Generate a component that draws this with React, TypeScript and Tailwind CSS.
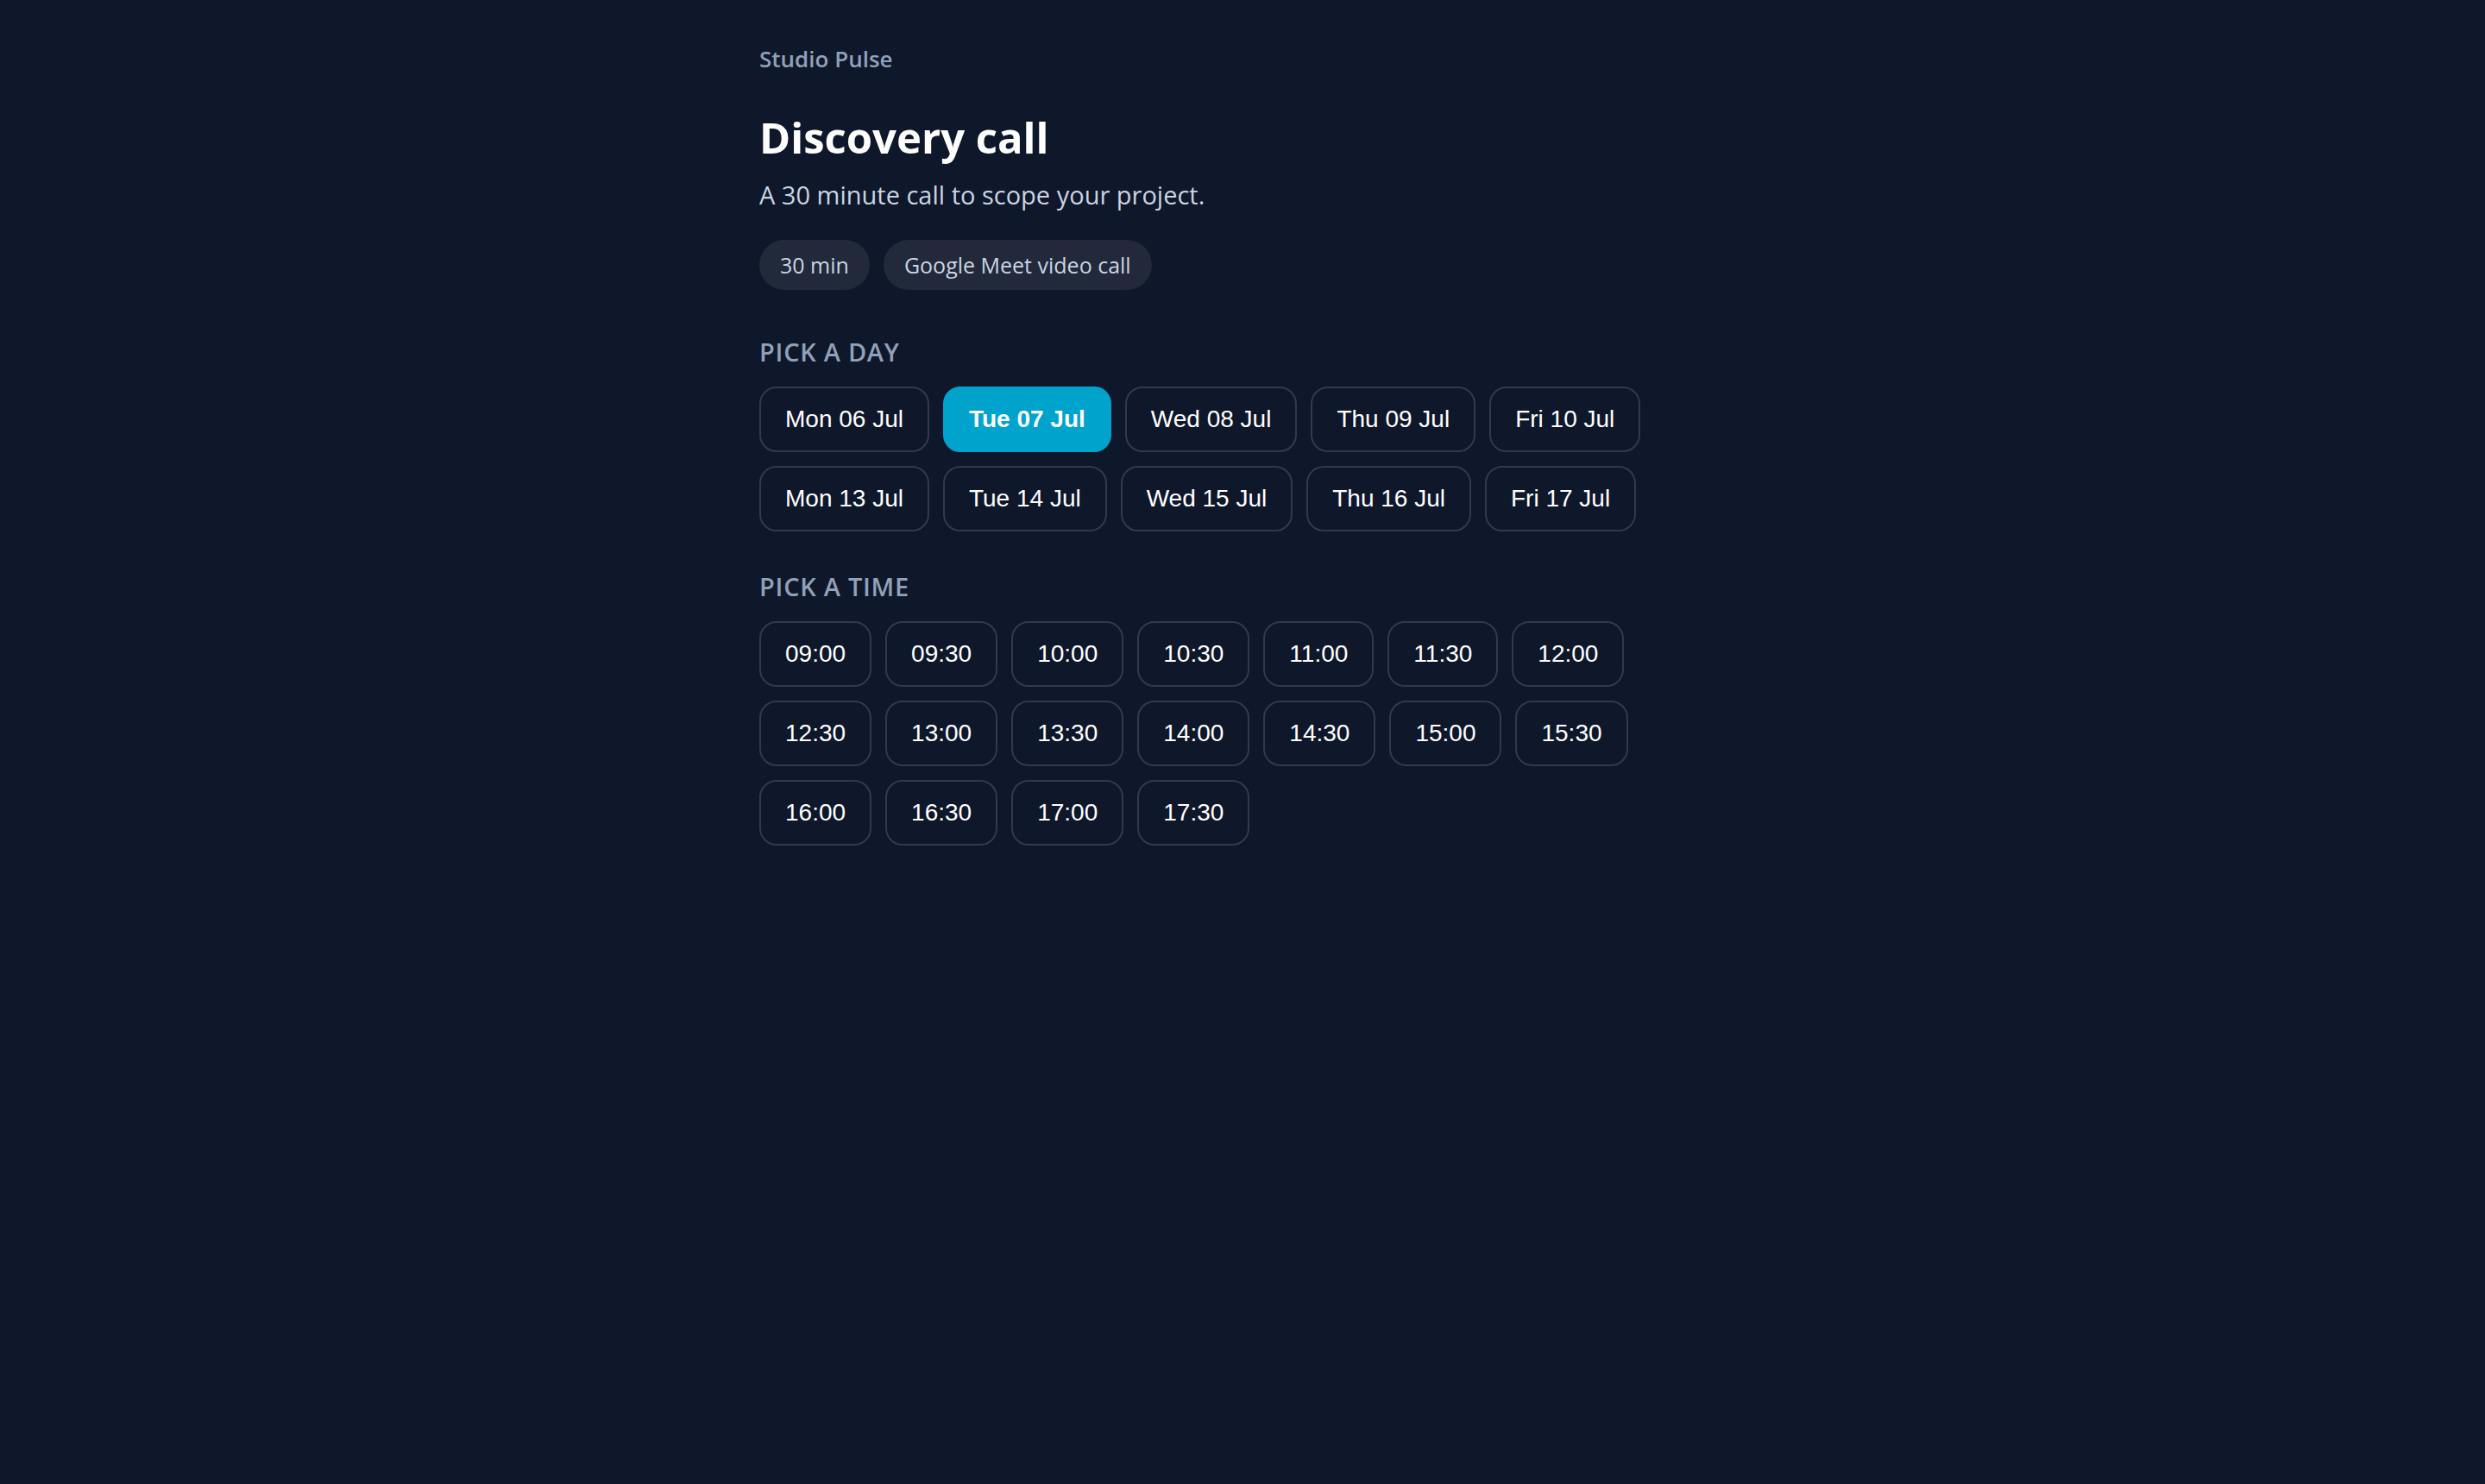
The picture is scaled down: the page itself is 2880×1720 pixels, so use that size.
import { useState } from "react";

const DETAILS = ["30 min", "Google Meet video call"];

const DAYS = [
  "Mon 06 Jul",
  "Tue 07 Jul",
  "Wed 08 Jul",
  "Thu 09 Jul",
  "Fri 10 Jul",
  "Mon 13 Jul",
  "Tue 14 Jul",
  "Wed 15 Jul",
  "Thu 16 Jul",
  "Fri 17 Jul",
];

const TIMES = [
  "09:00",
  "09:30",
  "10:00",
  "10:30",
  "11:00",
  "11:30",
  "12:00",
  "12:30",
  "13:00",
  "13:30",
  "14:00",
  "14:30",
  "15:00",
  "15:30",
  "16:00",
  "16:30",
  "17:00",
  "17:30",
];

type ChoiceGroupProps = {
  id: string;
  title: string;
  options: string[];
  selected: string | null;
  onSelect: (option: string) => void;
};

function ChoiceGroup({ id, title, options, selected, onSelect }: ChoiceGroupProps) {
  return (
    <section aria-labelledby={id}>
      <h2
        id={id}
        className="text-[29px] leading-[44px] font-semibold tracking-wide text-slate-400 uppercase"
      >
        {title}
      </h2>
      <div className="mt-[18px] flex flex-wrap gap-4">
        {options.map((option) => {
          const active = option === selected;
          return (
            <button
              key={option}
              type="button"
              aria-pressed={active}
              onClick={() => onSelect(option)}
              className={
                "cursor-pointer rounded-[20px] border-2 px-7 py-5 font-['Liberation_Sans',Arial,sans-serif] text-[28px] leading-8 text-white " +
                (active ? "border-[#00a3cc] bg-[#00a3cc] font-bold" : "border-white/15")
              }
            >
              {option}
            </button>
          );
        })}
      </div>
    </section>
  );
}

export default function App() {
  const [day, setDay] = useState<string | null>("Tue 07 Jul");
  const [time, setTime] = useState<string | null>(null);

  return (
    <div className="min-h-screen bg-slate-900 font-['Open_Sans','Noto_Sans',sans-serif] text-white">
      <main className="mx-auto flex max-w-[1200px] flex-col px-10 py-12">
        <p className="text-[26px] leading-10 font-semibold text-slate-400">Studio Pulse</p>
        <h1 className="mt-10 text-[49px] leading-[62px] font-bold">Discovery call</h1>
        <p className="mt-3.5 text-[29px] leading-[44px] text-slate-300">
          A 30 minute call to scope your project.
        </p>
        <ul className="mt-[30px] flex flex-wrap gap-4">
          {DETAILS.map((detail) => (
            <li
              key={detail}
              className="rounded-full bg-white/8 px-6 py-2 text-[25px] leading-[42px] text-slate-300"
            >
              {detail}
            </li>
          ))}
        </ul>
        <div className="mt-[50px] flex flex-col gap-[42px]">
          <ChoiceGroup id="pick-day" title="Pick a day" options={DAYS} selected={day} onSelect={setDay} />
          <ChoiceGroup id="pick-time" title="Pick a time" options={TIMES} selected={time} onSelect={setTime} />
        </div>
      </main>
    </div>
  );
}
